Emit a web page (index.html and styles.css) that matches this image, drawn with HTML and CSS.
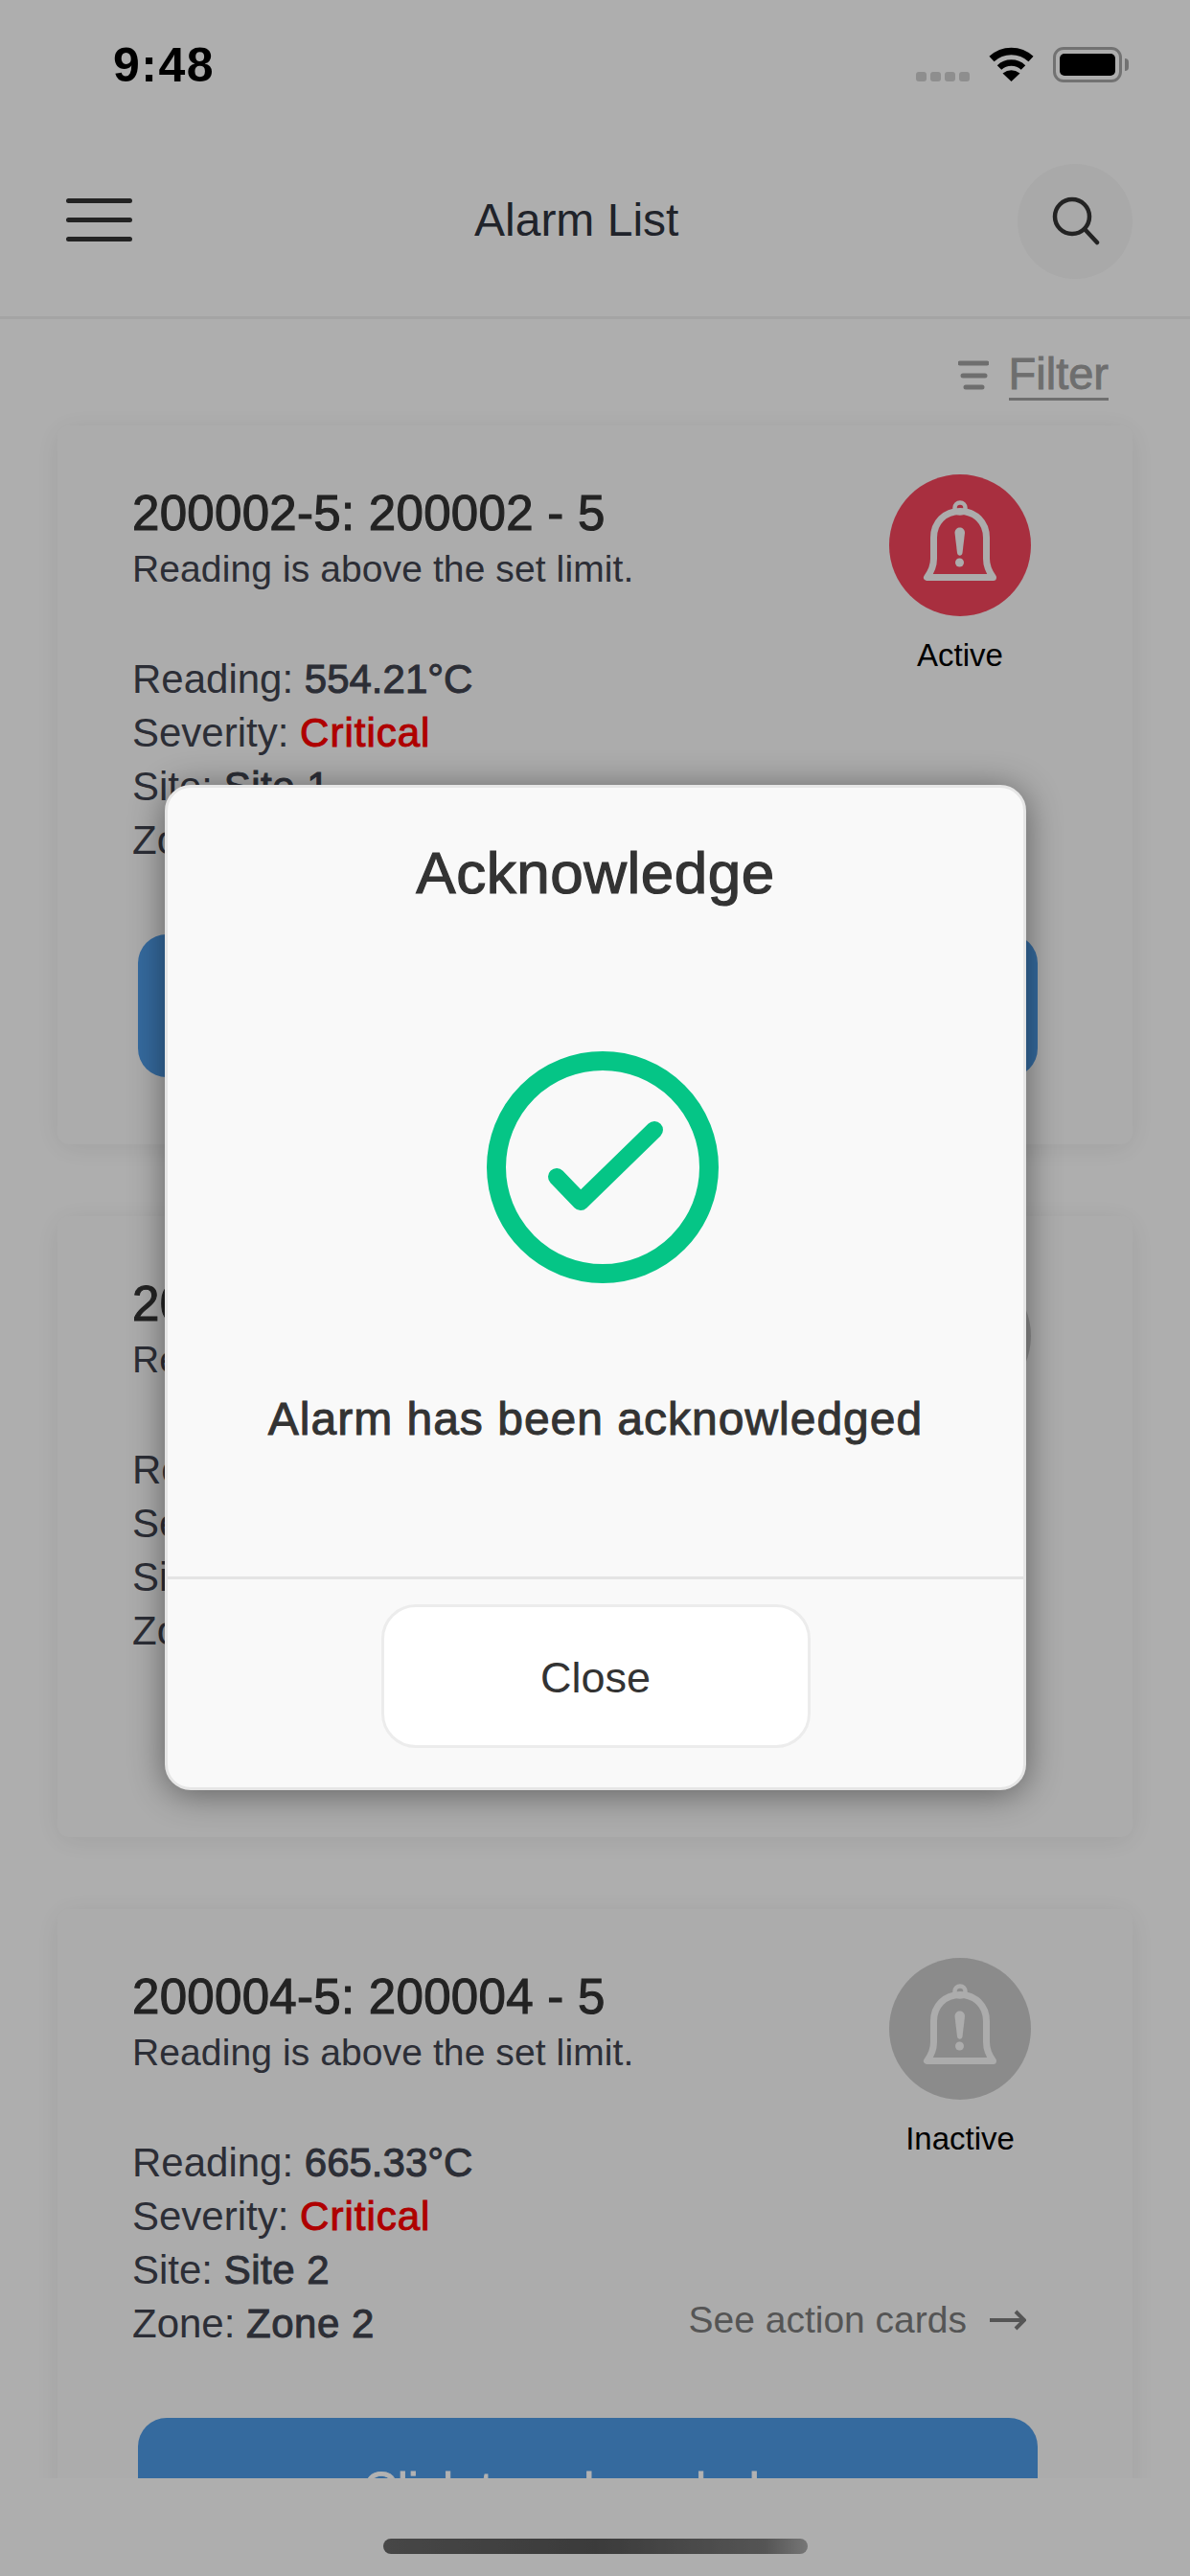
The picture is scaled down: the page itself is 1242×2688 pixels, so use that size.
FILE: index.html
```html
<!DOCTYPE html>
<html lang="en">
<head>
  <meta charset="UTF-8" />
  <meta name="viewport" content="width=device-width, initial-scale=1.0" />
  <title>Alarm List</title>
  <link rel="stylesheet" href="styles.css">
</head>
<body>

  <div class="status-bar">
    <span class="time">9:48</span>
    <div class="status-icons">
      <div class="signal"><i></i><i></i><i></i><i></i></div>
      <svg class="wifi" width="47" height="36" viewBox="0 0 47 36">
        <path d="M3 12.5 A30 30 0 0 1 44 12.5" fill="none" stroke="#000" stroke-width="7.5" />
        <path d="M11 21.5 A18 18 0 0 1 36 21.5" fill="none" stroke="#000" stroke-width="6.5" />
        <path d="M23.5 36 L14.5 27.5 Q23.5 21 32.5 27.5 Z" fill="#000" />
      </svg>
      <div class="battery"><div class="battery-fill"></div></div>
      <div class="battery-cap"></div>
    </div>
  </div>

  <header class="topbar">
    <svg class="menu-icon" width="69" height="46" viewBox="0 0 69 46">
      <path d="M2.5 2.5 H66.5 M2.5 22.5 H66.5 M2.5 42.5 H66.5" stroke="#333" stroke-width="5" stroke-linecap="round" />
    </svg>
    <h1 class="page-title">Alarm List</h1>
    <div class="search-btn">
      <svg width="56" height="56" viewBox="0 0 56 56">
        <circle cx="25" cy="23" r="18" fill="none" stroke="#333" stroke-width="4.5" />
        <path d="M38 36 L51 50" stroke="#333" stroke-width="4.5" stroke-linecap="round" />
      </svg>
    </div>
  </header>

  <main class="content">
    <div class="filter-row">
      <svg width="32" height="32" viewBox="0 0 32 32">
        <path d="M2 3 H30 M5 16 H28 M8 28 H25" stroke="#9e9e9e" stroke-width="5" stroke-linecap="round" />
      </svg>
      <span class="filter-link">Filter</span>
    </div>

    <section class="card">
      <div class="card-body">
        <div class="card-text">
          <h2 class="card-title">200002-5: 200002 - 5</h2>
          <p class="card-desc">Reading is above the set limit.</p>
          <ul class="details">
            <li>Reading: <b class="reading">554.21°C</b></li>
            <li>Severity: <b class="critical">Critical</b></li>
            <li>Site: <b>Site 1</b></li>
            <li>Zone: <b>Zone 1</b></li>
          </ul>
        </div>
        <div class="card-side">
          <div class="alarm-state">
            <div class="bell-circle active">
              <svg width="148" height="148" viewBox="0 0 148 148"><use href="#bell" /></svg>
            </div>
            <span class="state-label">Active</span>
          </div>
          <div class="action-link">See action cards
            <svg width="39" height="24" viewBox="0 0 39 24"><path d="M1 12 H37 M28 3 L37 12 L28 21" fill="none" stroke="#7a7a7a" stroke-width="4" /></svg>
          </div>
        </div>
      </div>
      <button class="ack-btn">Click to acknowledge</button>
    </section>

    <section class="card card-plain">
      <div class="card-body">
        <div class="card-text">
          <h2 class="card-title">200003-5: 200003 - 5</h2>
          <p class="card-desc">Reading is above the set limit.</p>
          <ul class="details">
            <li>Reading: <b class="reading">612.40°C</b></li>
            <li>Severity: <b class="critical">Critical</b></li>
            <li>Site: <b>Site 2</b></li>
            <li>Zone: <b>Zone 1</b></li>
          </ul>
        </div>
        <div class="card-side">
          <div class="alarm-state">
            <div class="bell-circle">
              <svg width="148" height="148" viewBox="0 0 148 148"><use href="#bell" /></svg>
            </div>
            <span class="state-label">Inactive</span>
          </div>
        </div>
      </div>
    </section>

    <section class="card">
      <div class="card-body">
        <div class="card-text">
          <h2 class="card-title">200004-5: 200004 - 5</h2>
          <p class="card-desc">Reading is above the set limit.</p>
          <ul class="details">
            <li>Reading: <b class="reading">665.33°C</b></li>
            <li>Severity: <b class="critical">Critical</b></li>
            <li>Site: <b>Site 2</b></li>
            <li>Zone: <b>Zone 2</b></li>
          </ul>
        </div>
        <div class="card-side">
          <div class="alarm-state">
            <div class="bell-circle">
              <svg width="148" height="148" viewBox="0 0 148 148"><use href="#bell" /></svg>
            </div>
            <span class="state-label">Inactive</span>
          </div>
          <div class="action-link">See action cards
            <svg width="39" height="24" viewBox="0 0 39 24"><path d="M1 12 H37 M28 3 L37 12 L28 21" fill="none" stroke="#7a7a7a" stroke-width="4" /></svg>
          </div>
        </div>
      </div>
      <button class="ack-btn">Click to acknowledge</button>
    </section>
  </main>

  <div class="home-area"><div class="home-bar"></div></div>

  <div class="overlay">
    <div class="modal">
      <h2 class="modal-title">Acknowledge</h2>
      <div class="modal-body">
        <svg class="check" width="242" height="242" viewBox="0 0 242 242">
          <circle cx="121" cy="121" r="111" fill="none" stroke="#05c586" stroke-width="20" />
          <path d="M73 131 L98 157 L175 82" fill="none" stroke="#05c586" stroke-width="18" stroke-linecap="round" stroke-linejoin="round" />
        </svg>
        <p class="modal-msg">Alarm has been acknowledged</p>
      </div>
      <div class="modal-footer">
        <button class="close-btn">Close</button>
      </div>
    </div>
  </div>

  <svg width="0" height="0" class="defs">
    <symbol id="bell" viewBox="0 0 148 148">
      <circle cx="74" cy="35" r="5.5" fill="none" stroke="currentColor" stroke-width="4.5" />
      <path d="M39.5 107.5 H108.5 C103 100 101.5 95 101.5 88 V66 C101.5 50 90 38.5 74 38.5 C58 38.5 46.5 50 46.5 66 V88 C46.5 95 45 100 39.5 107.5 Z" fill="none" stroke="currentColor" stroke-width="7" stroke-linejoin="round" />
      <path d="M68.5 61 C68.5 53.5 79 53.5 79 61 L76.5 82 C76 85.5 71.5 85.5 71 82 Z" fill="currentColor" />
      <circle cx="73.5" cy="92" r="4.5" fill="currentColor" />
    </symbol>
  </svg>

</body>
</html>
```

FILE: styles.css
```css
* {
  box-sizing: border-box;
}

body {
  position: relative;
  width: 1242px;
  height: 2688px;
  margin: 0;
  overflow: hidden;
  background-color: #fafafa;
  font-family: "Liberation Sans", Arial, sans-serif;
  color: #3f434e;
}

.defs {
  position: absolute;
}

/* status bar */
.status-bar {
  display: flex;
  align-items: flex-start;
  justify-content: space-between;
  height: 132px;
  padding: 40px 64px 0 118px;
}

.time {
  font-size: 50px;
  line-height: 56px;
  font-weight: 700;
  letter-spacing: 1.5px;
  color: #000;
}

.status-icons {
  display: flex;
  align-items: flex-start;
  padding-top: 9px;
}

.signal {
  display: flex;
  gap: 4px;
  margin-top: 26px;
  margin-right: 20px;
}

.signal i {
  width: 11px;
  height: 10px;
  border-radius: 3px;
  background: #ccc;
}

.battery {
  width: 72px;
  height: 37px;
  margin-left: 20px;
  padding: 4px;
  border: 3px solid #a4a4a4;
  border-radius: 11px;
}

.battery-fill {
  height: 100%;
  border-radius: 5px;
  background: #000;
}

.battery-cap {
  width: 4px;
  height: 13px;
  margin-top: 12px;
  margin-left: 3px;
  border-radius: 0 4px 4px 0;
  background: #a4a4a4;
}

/* top bar */
.topbar {
  position: relative;
  display: flex;
  align-items: center;
  justify-content: space-between;
  height: 201px;
  padding: 0 60px 0 69px;
  border-bottom: 3px solid #ebebeb;
}

.menu-icon {
  margin-bottom: 2px;
}

.page-title {
  position: absolute;
  left: 495px;
  margin: 0 0 3px;
  font-size: 48px;
  font-weight: 400;
  color: #2f333d;
}

.search-btn {
  display: flex;
  align-items: center;
  justify-content: center;
  width: 120px;
  height: 120px;
  border-radius: 50%;
  background: #f2f2f2;
}

/* list */
.content {
  height: 2253px;
  padding: 0 60px;
  overflow: hidden;
}

.filter-row {
  display: flex;
  align-items: center;
  justify-content: flex-end;
  gap: 21px;
  height: 111px;
  padding: 6px 25px 0 0;
}

.filter-link {
  font-size: 47px;
  line-height: 50px;
  color: #9e9e9e;
  -webkit-text-stroke: 0.9px #9e9e9e;
  border-bottom: 3px solid #9e9e9e;
}

.card {
  margin-bottom: 75px;
  padding: 51px 99px 70px 78px;
  border-radius: 12px;
  background: #f6f6f6;
  box-shadow: 0 4px 30px rgba(0, 0, 0, 0.08);
}

.card-plain {
  padding-bottom: 187px;
}

.card-body {
  display: flex;
  justify-content: space-between;
}

.card-title {
  margin: 11px 0 0;
  font-size: 51px;
  line-height: 60px;
  font-weight: 400;
  letter-spacing: 0.3px;
  color: #333;
  -webkit-text-stroke: 1.1px #333;
}

.card-desc {
  margin: 0;
  font-size: 39px;
  line-height: 56px;
  letter-spacing: 0.1px;
}

.details {
  margin: 59px 0 0;
  padding: 0;
  list-style: none;
  font-size: 42px;
  line-height: 56px;
}

.details b {
  font-weight: 400;
  letter-spacing: 0.5px;
  -webkit-text-stroke: 1px #3f434e;
}

.details .reading {
  letter-spacing: 0;
}

.details .critical {
  letter-spacing: 1px;
  color: #fb0000;
  -webkit-text-stroke: 1px #fb0000;
}

.card-side {
  display: flex;
  flex-direction: column;
  align-items: flex-end;
  justify-content: space-between;
}

.alarm-state {
  display: flex;
  flex-direction: column;
  align-items: center;
  width: 148px;
  margin-right: 7px;
}

.bell-circle {
  width: 148px;
  height: 148px;
  border-radius: 50%;
  background: #c8c8c8;
  color: #f6f6f6;
}

.bell-circle.active {
  background: #f1445b;
}

.bell-circle svg {
  display: block;
}

.state-label {
  margin-top: 21px;
  font-size: 33px;
  line-height: 40px;
  white-space: nowrap;
  color: #000;
}

.action-link {
  display: flex;
  align-items: center;
  gap: 23px;
  margin-right: 12px;
  padding-bottom: 4px;
  font-size: 39px;
  line-height: 56px;
  color: #7a7a7a;
}

.ack-btn {
  display: block;
  width: 939px;
  height: 149px;
  margin: 70px 0 0 6px;
  border: none;
  border-radius: 30px;
  background: #4d98e2;
  color: #fff;
  font-family: inherit;
  font-size: 50px;
  -webkit-text-stroke: 0.8px #fff;
}

/* home indicator */
.home-area {
  display: flex;
  justify-content: center;
  height: 103px;
  padding-top: 63px;
  background-color: #fafafa;
}

.home-bar {
  width: 443px;
  height: 16px;
  border-radius: 8px;
  background: linear-gradient(90deg, #666 0%, #555 50%, #7a7a7a 90%, #aaa 100%);
}

/* acknowledge dialog */
.overlay {
  position: absolute;
  top: 0;
  left: 0;
  width: 1242px;
  height: 2688px;
  padding: 819px 0 0 172px;
  background: rgba(0, 0, 0, 0.3);
}

.modal {
  display: flex;
  flex-direction: column;
  width: 899px;
  height: 1049px;
  border: 3px solid #e6e6e6;
  border-radius: 27px;
  background: #f9f9f9;
  box-shadow: 0 4px 36px rgba(0, 0, 0, 0.45);
}

.modal-title {
  margin: 0;
  padding-top: 54px;
  font-size: 62px;
  line-height: 70px;
  font-weight: 400;
  letter-spacing: 0.5px;
  text-align: center;
  color: #333;
  -webkit-text-stroke: 1.2px #333;
}

.modal-body {
  display: flex;
  flex-direction: column;
  align-items: center;
  flex: 1;
}

.check {
  margin: 151px 0 0 15px;
}

.modal-msg {
  margin: 112px 0 0;
  font-size: 48px;
  line-height: 60px;
  letter-spacing: 1px;
  color: #333;
  -webkit-text-stroke: 1px #333;
}

.modal-footer {
  display: flex;
  justify-content: center;
  height: 220px;
  padding-top: 26px;
  border-top: 3px solid #e4e4e4;
}

.close-btn {
  width: 448px;
  height: 150px;
  padding-top: 5px;
  border: 3px solid #ececec;
  border-radius: 36px;
  background: #fff;
  font-family: inherit;
  font-size: 45px;
  color: #333;
}
```
